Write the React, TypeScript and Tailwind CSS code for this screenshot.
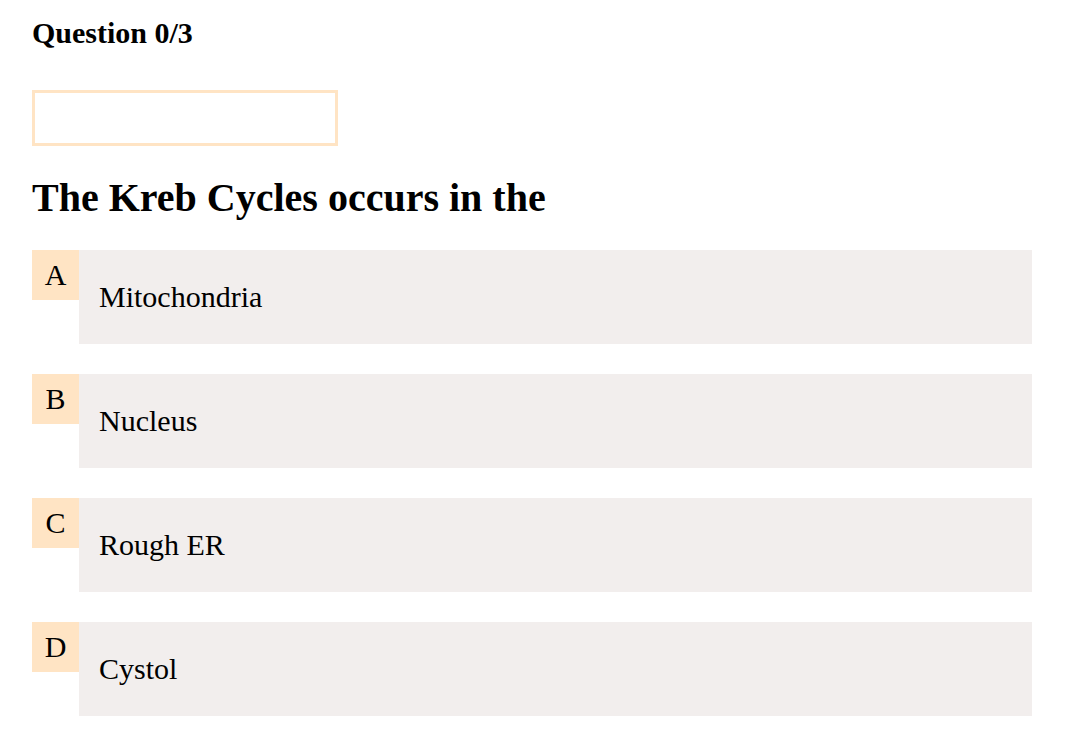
const options = [
  { letter: "A", text: "Mitochondria" },
  { letter: "B", text: "Nucleus" },
  { letter: "C", text: "Rough ER" },
  { letter: "D", text: "Cystol" },
];

export default function App() {
  return (
    <div className="min-h-screen bg-white px-8 pt-4 font-['Liberation_Serif','Times_New_Roman',serif] text-black">
      <div className="text-[30px] font-bold leading-[34px]">Question 0/3</div>

      {/* answer progress box */}
      <div className="mt-10 h-[56px] w-[306px] border-[3px] border-[#ffe4c4]"></div>

      <h1 className="mt-[29px] text-[40px] font-bold leading-[46px]">
        The Kreb Cycles occurs in the
      </h1>

      <div className="mt-[29px] flex w-[1000px] flex-col gap-[30px]">
        {options.map((o) => (
          <div key={o.letter} className="flex items-start">
            <span className="h-[50px] w-[47px] bg-[#ffe4c4] pt-2 text-center text-[30px] leading-[34px]">
              {o.letter}
            </span>
            <div className="flex-1 bg-[#f2eeed] px-5 py-[30px] text-[30px] leading-[34px]">
              {o.text}
            </div>
          </div>
        ))}
      </div>
    </div>
  );
}
